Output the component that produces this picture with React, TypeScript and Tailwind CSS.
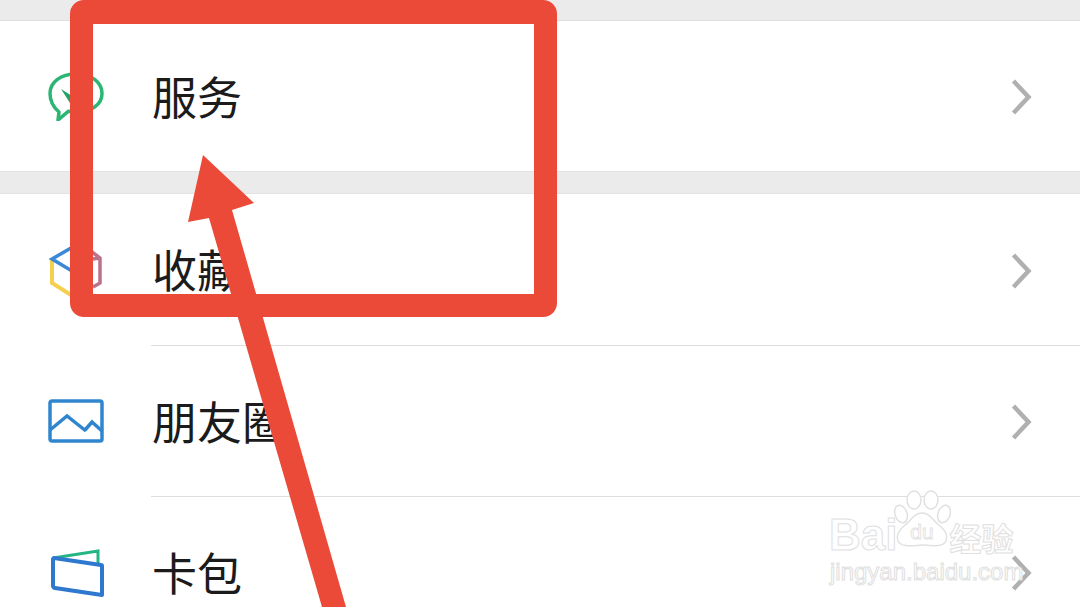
const rowFont = { fontFamily: '"Noto Sans CJK SC", "Noto Sans", sans-serif' }

function Chevron() {
  return (
    <svg viewBox="0 0 24 36" aria-hidden="true" className="-mr-px -translate-x-0.5 translate-y-px h-9 w-6 shrink-0">
      <path d="M3.500 2l15 16-15 16" fill="none" stroke="#b0b0b0" strokeWidth="4.500" />
    </svg>
  )
}

function ChatIcon() {
  return (
    <svg viewBox="0 0 56 50" aria-hidden="true" className="h-[50px] w-14">
      <path
        d="M11 41C5 36 2 30 2 22.500 2 11 13 3 28 3s26 8 26 19.500S43 41 28 41c-2.500 0-5-.3-7.500-.8L10 49z"
        fill="none"
        stroke="#2bb673"
        strokeWidth="3.500"
        strokeLinejoin="round"
      />
      <path d="M13 18l9 14 2-7z" fill="#1fa565" />
    </svg>
  )
}

function CubeIcon() {
  return (
    <svg viewBox="0 0 56 56" aria-hidden="true" className="h-14 w-14">
      <path d="M4 17v24l19 12" fill="none" stroke="#f5d04e" strokeWidth="4" />
      <path d="M23 6L4 17l20 12" fill="none" stroke="#3b87d8" strokeWidth="3.500" />
      <path d="M44 10l8 6v25l-7 4M45 17l7-1" fill="none" stroke="#bb7389" strokeWidth="3.500" />
    </svg>
  )
}

function PhotoIcon() {
  return (
    <svg viewBox="0 0 56 44" aria-hidden="true" className="h-11 w-14">
      <rect x="2" y="2" width="52" height="40" rx="2" fill="none" stroke="#2f86cf" strokeWidth="3.500" />
      <path
        d="M2 31l17-14 19 15M37 31l7-8 10 9"
        fill="none"
        stroke="#2f86cf"
        strokeWidth="3.500"
      />
    </svg>
  )
}

function CardIcon() {
  return (
    <svg viewBox="0 0 56 52" aria-hidden="true" className="h-[52px] w-14">
      <path d="M5 12l45-7v12" fill="none" stroke="#25b585" strokeWidth="3" />
      <path
        d="M6 12l47 7c1 0 1 1 1 1v29L7 42c-1 0-2-1-2-2V13z"
        fill="none"
        stroke="#2f78cf"
        strokeWidth="4"
        strokeLinejoin="round"
      />
    </svg>
  )
}

function Row({
  icon,
  label,
  className,
}: {
  icon: React.ReactNode
  label: string
  className: string
}) {
  return (
    <div className={`flex items-center bg-white pl-12 pr-[45px] ${className}`}>
      <div className="flex w-14 shrink-0 items-center justify-center">{icon}</div>
      <span
        className="ml-12 flex-1 -translate-y-px text-[45px] leading-none text-[#1b1b1b]"
        style={rowFont}
      >
        {label}
      </span>
      <Chevron />
    </div>
  )
}

function Watermark() {
  return (
    <div className="absolute left-[829px] top-[490px] w-[200px] text-white">
      <div className="flex h-[64px] items-end">
        <span className="-mb-[5px] font-['Liberation_Sans',sans-serif] text-[44px] font-bold leading-[48px] [-webkit-text-stroke:1px_#e0e0e0]">
          Bai
        </span>
        <svg viewBox="0 0 60 60" aria-hidden="true" className="-ml-1.5 mb-[5px] h-[60px] w-[60px] shrink-0">
          <g fill="#fff" stroke="#e0e0e0" strokeWidth="1.500">
            <ellipse cx="10" cy="25" rx="6" ry="9" transform="rotate(-20 10 25)" />
            <ellipse cx="23" cy="11" rx="7" ry="9" />
            <ellipse cx="40" cy="11" rx="7" ry="9" />
            <ellipse cx="53" cy="25" rx="6" ry="9" transform="rotate(20 53 25)" />
            <path d="M31 24c-8 0-11 8-18 13-6 5-8 10-6 15 3 6 11 5 24 4 12 1 21 2 24-4 2-5 0-10-6-15-7-5-10-13-18-13z" />
          </g>
          <text
            x="31"
            y="50"
            textAnchor="middle"
            fontFamily="Liberation Sans, sans-serif"
            fontSize="21"
            fill="#fff"
            stroke="#e0e0e0"
            strokeWidth="0.800"
          >
            du
          </text>
        </svg>
        <span
          className="-mb-[3px] -ml-0.5 text-[32px] font-bold leading-[40px] [-webkit-text-stroke:1px_#e0e0e0]"
          style={rowFont}
        >
          经验
        </span>
      </div>
      <div className="ml-px mt-[3px] whitespace-nowrap font-['Liberation_Sans',sans-serif] text-[24px] leading-[30px] [-webkit-text-stroke:1px_#e0e0e0]">
        jingyan.baidu.com
      </div>
    </div>
  )
}

export default function App() {
  return (
    <div className="relative h-[607px] w-[1080px] overflow-hidden bg-white">
      <div className="h-[21px] border-b border-[#dfdfdf] bg-[#ebebeb]" />
      <Row icon={<ChatIcon />} label="服务" className="h-[150px]" />
      <div className="h-[23px] border-y border-[#e2e2e2] bg-[#ebebeb]" />
      <Row icon={<CubeIcon />} label="收藏" className="h-[151px]" />
      <div className="ml-[151px] h-px bg-[#dedede]" />
      <Row icon={<PhotoIcon />} label="朋友圈" className="h-[150px]" />
      <div className="ml-[151px] h-px bg-[#dedede]" />
      <Row icon={<CardIcon />} label="卡包" className="h-[150px]" />

      <Watermark />

      {/* Red annotation drawn over the screenshot */}
      <div className="absolute left-[70px] top-0 h-[317px] w-[487px] rounded-[14px] border-[23px] border-t-[24px] border-[#ec4a39]" />
      <svg
        viewBox="0 0 1080 607"
        aria-hidden="true"
        className="absolute inset-0 h-[607px] w-[1080px]"
      >
        <path
          d="M203 155L254 203 232 210 346 607H322L209 218 188 222z"
          fill="#ec4a39"
        />
      </svg>
    </div>
  )
}
